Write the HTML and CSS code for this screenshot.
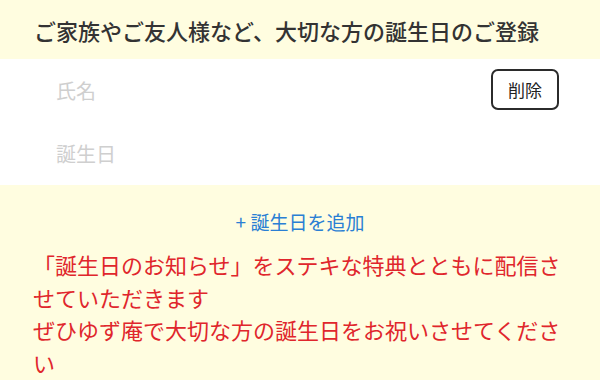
FILE: index.html
```html
<!DOCTYPE html>
<html lang="ja">
<head>
<meta charset="utf-8">
<title>誕生日のご登録</title>
<link rel="stylesheet" href="styles.css">
</head>
<body>
<div class="page">
  <h2 class="title">ご家族やご友人様など、大切な方の誕生日のご登録</h2>
  <div class="card">
    <div class="row">
      <span class="placeholder">氏名</span>
      <button class="del" type="button">削除</button>
    </div>
    <div class="row">
      <span class="placeholder">誕生日</span>
    </div>
  </div>
  <div class="add"><a class="add-link" href="#">+ 誕生日を追加</a></div>
  <p class="notice">「誕生日のお知らせ」をステキな特典とともに配信させていただきます<br>ぜひゆず庵で大切な方の誕生日をお祝いさせてください</p>
</div>
</body>
</html>
```

FILE: styles.css
```css
html, body {
  margin: 0;
  padding: 0;
  background: #fffde0;
}
body {
  width: 600px;
  height: 380px;
  overflow: hidden;
  font-family: "Noto Sans CJK JP", "Noto Sans", sans-serif;
}
.page {
  display: flex;
  flex-direction: column;
}
.title {
  margin: 0;
  height: 59px;
  padding: 0 34px;
  display: flex;
  align-items: center;
  font-size: 22px;
  font-weight: 500;
  color: #333;
}
.card {
  background: #fff;
  display: flex;
  flex-direction: column;
}
.row {
  height: 63px;
  padding: 0 41px 0 56px;
  display: flex;
  align-items: center;
  justify-content: space-between;
}
.placeholder {
  font-size: 20px;
  color: #cfcfcf;
}
.del {
  width: 68px;
  height: 41px;
  box-sizing: border-box;
  border: 2px solid #2b2b2b;
  border-radius: 7px;
  background: #fff;
  font-family: "Noto Sans CJK JP", sans-serif;
  font-size: 17px;
  color: #222;
  padding: 0;
  margin-top: -2px;
}
.add {
  padding-top: 23px;
  text-align: center;
  line-height: 27px;
}
.add-link {
  font-size: 19px;
  color: #2a7fd4;
  text-decoration: none;
}
.notice {
  margin: 11px 0 0;
  padding: 0 36px 0 33px;
  font-size: 22px;
  line-height: 32.5px;
  color: #e0262c;
}
```
